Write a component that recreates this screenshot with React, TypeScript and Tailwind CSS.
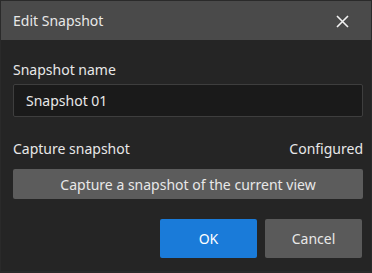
import React from "react";

export default function App() {
  return (
    <div
      className="w-[372px] h-[273px] bg-[#2a2a2a] pt-[1px] pl-[1px] overflow-hidden"
      style={{ fontFamily: '"Noto Sans", "Open Sans", sans-serif' }}
    >
      <div className="w-[370px] h-[270px] bg-[#252525] flex flex-col text-[#e8e8e8]">
        <div className="h-[39px] bg-[#4a4a4a] flex items-center justify-between pl-[12px] pr-[22px]">
          <span className="text-[14px] leading-none mt-[1px]">Edit Snapshot</span>
          <svg width="13" height="13" viewBox="0 0 13 13" className="mt-[1px]">
            <path d="M1 1 L12 12 M12 1 L1 12" stroke="#f2f2f2" strokeWidth="1.6" />
          </svg>
        </div>
        <div className="flex flex-col pl-[12px] pr-[8px] pt-[21px]">
          <div className="text-[14px] leading-[18px]">Snapshot name</div>
          <div className="mt-[5px] h-[33px] bg-[#1a1a1a] border border-[#3e3e3e] rounded-[2px] flex items-center pl-[12px] text-[14px]">
            Snapshot 01
          </div>
          <div className="mt-[23px] flex justify-between text-[14px] leading-[18px]">
            <span>Capture snapshot</span>
            <span>Configured</span>
          </div>
          <div className="mt-[11px] h-[30px] bg-[#5c5c5c] rounded-[2px] flex items-center justify-center text-[14px]">
            Capture a snapshot of the current view
          </div>
          <div className="mt-[20px] flex justify-end gap-[8px] pr-[1px]">
            <div className="w-[97px] h-[39px] bg-[#1a7bd9] rounded-[2px] flex items-center justify-center text-[14px] text-white">
              OK
            </div>
            <div className="w-[97px] h-[39px] bg-[#5a5a5a] rounded-[2px] flex items-center justify-center text-[14px]">
              Cancel
            </div>
          </div>
        </div>
      </div>
    </div>
  );
}
